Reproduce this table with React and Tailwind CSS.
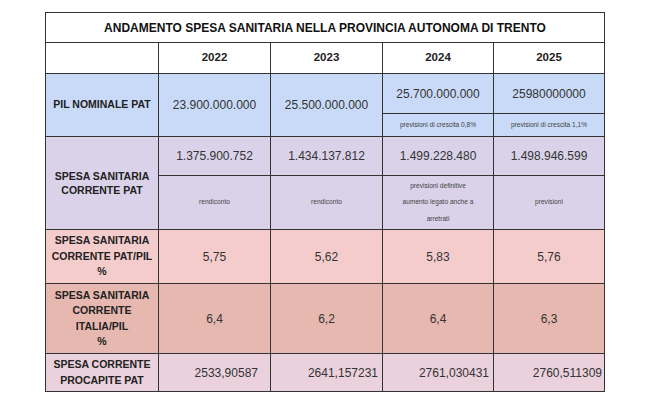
import React from 'react'

const cell = 'flex items-center justify-center text-center'

function Label({ children, bg }) {
  return (
    <div className={`${cell} ${bg} px-1 text-[10.5px] font-bold leading-[15.5px] text-[#222]`}>
      <div>{children}</div>
    </div>
  )
}

function Val({ children, bg, extra = '' }) {
  return <div className={`${cell} ${bg} text-[12px] text-[#333] ${extra}`}>{children}</div>
}

function Note({ children, bg }) {
  return <div className={`${cell} ${bg} px-2 text-[6.6px] leading-[16.5px] text-[#444]`}>{children}</div>
}

export default function App() {
  const blue = 'bg-[#c9daf8]'
  const lilac = 'bg-[#d9d2e9]'
  const pink = 'bg-[#f4cccc]'
  const rose = 'bg-[#e6b8af]'
  const mauve = 'bg-[#ead1dc]'

  return (
    <div className="min-h-[406px] bg-white pt-[12px] font-['Liberation_Sans',Arial,sans-serif]">
      <div className="mx-auto grid w-[560px] grid-cols-[112px_111px_111px_110px_110px] grid-rows-[29px_30px_39px_22px_38px_53px_53px_69px_37px] gap-px bg-[#333] p-px">
        <div className={`${cell} col-span-5 bg-white text-[12px] font-bold text-[#111]`}>
          ANDAMENTO SPESA SANITARIA NELLA PROVINCIA AUTONOMA DI TRENTO
        </div>

        <div className="bg-white" />
        {['2022', '2023', '2024', '2025'].map((y) => (
          <div key={y} className={`${cell} bg-white text-[11.5px] font-bold text-[#222]`}>
            {y}
          </div>
        ))}

        <div className={`row-span-2 ${cell} ${blue} text-[10.5px] font-bold text-[#222]`}>PIL NOMINALE PAT</div>
        <Val bg={blue} extra="row-span-2">23.900.000.000</Val>
        <Val bg={blue} extra="row-span-2">25.500.000.000</Val>
        <Val bg={blue}>25.700.000.000</Val>
        <Val bg={blue}>25980000000</Val>
        <Note bg={blue}>previsioni di crescita 0,8%</Note>
        <Note bg={blue}>previsioni di crescita 1,1%</Note>

        <div className={`row-span-2 ${cell} ${lilac} text-[10.5px] font-bold leading-[14px] text-[#222]`}>
          <div>
            SPESA SANITARIA
            <br />
            CORRENTE PAT
          </div>
        </div>
        <Val bg={lilac}>1.375.900.752</Val>
        <Val bg={lilac}>1.434.137.812</Val>
        <Val bg={lilac}>1.499.228.480</Val>
        <Val bg={lilac}>1.498.946.599</Val>
        <Note bg={lilac}>rendiconto</Note>
        <Note bg={lilac}>rendiconto</Note>
        <Note bg={lilac}>
          previsioni definitive
          <br />
          aumento legato anche a
          <br />
          arretrati
        </Note>
        <Note bg={lilac}>previsioni</Note>

        <Label bg={pink}>
          SPESA SANITARIA
          <br />
          CORRENTE PAT/PIL
          <br />%
        </Label>
        <Val bg={pink}>5,75</Val>
        <Val bg={pink}>5,62</Val>
        <Val bg={pink}>5,83</Val>
        <Val bg={pink}>5,76</Val>

        <Label bg={rose}>
          SPESA SANITARIA
          <br />
          CORRENTE
          <br />
          ITALIA/PIL
          <br />%
        </Label>
        <Val bg={rose}>6,4</Val>
        <Val bg={rose}>6,2</Val>
        <Val bg={rose}>6,4</Val>
        <Val bg={rose}>6,3</Val>

        <Label bg={mauve}>
          SPESA CORRENTE
          <br />
          PROCAPITE PAT
        </Label>
        <Val bg={mauve} extra="justify-end pr-[12px]">2533,90587</Val>
        <Val bg={mauve} extra="justify-end pr-[4px]">2641,157231</Val>
        <Val bg={mauve} extra="justify-end pr-[4px]">2761,030431</Val>
        <Val bg={mauve} extra="justify-end pr-[2px]">2760,511309</Val>
      </div>
    </div>
  )
}
